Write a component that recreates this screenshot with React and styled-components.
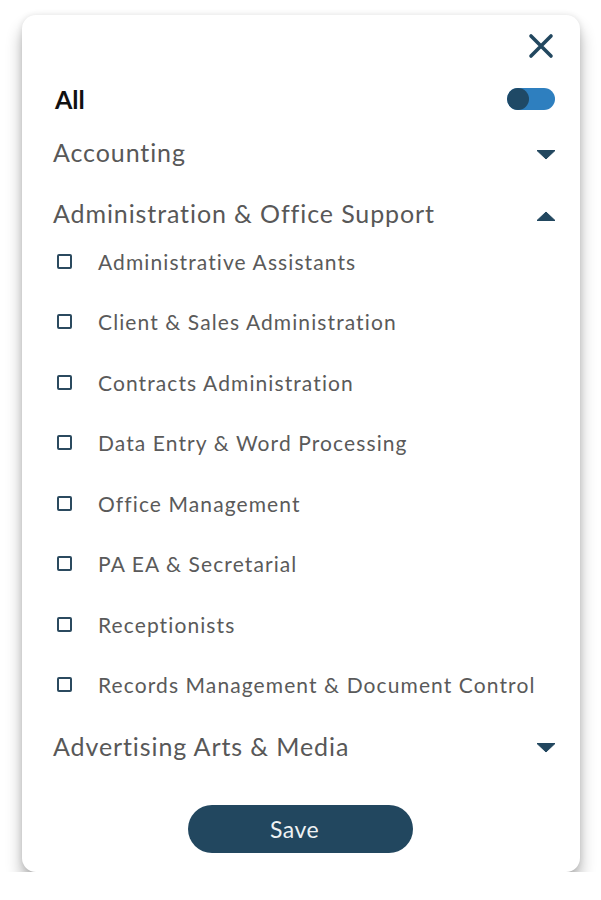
import React, { useState } from 'react';
import styled, { createGlobalStyle } from 'styled-components';

const GlobalStyle = createGlobalStyle`
  body {
    margin: 0;
    background: #ffffff;
    font-family: Lato, "Open Sans", sans-serif;
  }
`;

const navy = '#22475f';

const groups = [
  { name: 'Accounting', open: false, items: [] },
  {
    name: 'Administration & Office Support',
    open: true,
    items: [
      'Administrative Assistants',
      'Client & Sales Administration',
      'Contracts Administration',
      'Data Entry & Word Processing',
      'Office Management',
      'PA EA & Secretarial',
      'Receptionists',
      'Records Management & Document Control',
    ],
  },
  { name: 'Advertising Arts & Media', open: false, items: [] },
];

const Caret = ({ up }) => (
  <CaretIcon width="20" height="10" viewBox="0 0 20 10">
    {up ? (
      <path d="M1 9.5 L10 1 L19 9.5 Z" fill={navy} stroke={navy} strokeLinejoin="round" strokeWidth="1" />
    ) : (
      <path d="M1 0.5 L19 0.5 L10 9 Z" fill={navy} stroke={navy} strokeLinejoin="round" strokeWidth="1" />
    )}
  </CaretIcon>
);

const App = () => {
  const [all, setAll] = useState(true);

  return (
    <>
      <GlobalStyle />
      <Card>
        <CloseRow>
          <CloseButton aria-label="Close">
            <svg width="26" height="26" viewBox="0 0 26 26">
              <path d="M3 3 L23 23 M23 3 L3 23" stroke={navy} strokeWidth="3.6" strokeLinecap="round" />
            </svg>
          </CloseButton>
        </CloseRow>

        <AllRow>
          <AllLabel>All</AllLabel>
          <Toggle $on={all} onClick={() => setAll(!all)}>
            <Knob $on={all} />
          </Toggle>
        </AllRow>

        <Groups>
          {groups.map(g => (
            <Group key={g.name}>
              <GroupHeader>
                <GroupName>{g.name}</GroupName>
                <Caret up={g.open} />
              </GroupHeader>
              {g.open && (
                <ItemList>
                  {g.items.map(item => (
                    <Item key={item}>
                      <Box />
                      <ItemLabel>{item}</ItemLabel>
                    </Item>
                  ))}
                </ItemList>
              )}
            </Group>
          ))}
        </Groups>

        <Footer>
          <SaveButton>Save</SaveButton>
        </Footer>
      </Card>
    </>
  );
};

export default App;

const Card = styled.div`
  box-sizing: border-box;
  margin: 15px 0 0 22px;
  width: 558px;
  height: 857px;
  background: #ffffff;
  border-radius: 14px;
  box-shadow: 0 12px 16px rgba(0, 0, 0, 0.3), 0 0 6px rgba(0, 0, 0, 0.1);
  padding: 18px 25px 19px 31px;
  display: flex;
  flex-direction: column;
`;

const CloseRow = styled.div`
  display: flex;
  justify-content: flex-end;
  height: 26px;
  padding-right: 1px;
`;

const CloseButton = styled.button`
  border: none;
  background: none;
  padding: 0;
  width: 26px;
  height: 26px;
  cursor: pointer;
`;

const AllRow = styled.div`
  display: flex;
  align-items: center;
  justify-content: space-between;
  height: 30px;
  margin-top: 25px;
  padding-left: 2px;
`;

const AllLabel = styled.span`
  font-size: 25px;
  font-weight: 700;
  color: #111111;
`;

const Toggle = styled.div`
  width: 48px;
  height: 22px;
  border-radius: 11px;
  background: ${p => (p.$on ? '#2e7fbf' : '#cfd6dc')};
  display: flex;
  align-items: center;
  justify-content: flex-start;
  cursor: pointer;
`;

const Knob = styled.div`
  width: 22px;
  height: 22px;
  border-radius: 50%;
  background: #1f4966;
`;

const Groups = styled.div`
  display: flex;
  flex-direction: column;
  gap: 21px;
  margin-top: 18px;
`;

const Group = styled.div`
  display: flex;
  flex-direction: column;
`;

const GroupHeader = styled.div`
  display: flex;
  align-items: center;
  justify-content: space-between;
  height: 40px;
`;

const CaretIcon = styled.svg`
  margin-top: 5px;
  margin-right: -1px;
`;

const GroupName = styled.span`
  font-size: 25px;
  letter-spacing: 0.9px;
  color: #585858;
`;

const ItemList = styled.div`
  display: flex;
  flex-direction: column;
  gap: 20.5px;
  margin-top: 8px;
`;

const Item = styled.label`
  display: flex;
  align-items: center;
  height: 40px;
  padding-left: 4px;
  cursor: pointer;
`;

const Box = styled.span`
  box-sizing: border-box;
  width: 15px;
  height: 15px;
  border: 2px solid #2b4a5f;
  border-radius: 2px;
  flex-shrink: 0;
`;

const ItemLabel = styled.span`
  margin-left: 26px;
  font-size: 21px;
  letter-spacing: 1.1px;
  color: #5a5a5a;
`;

const Footer = styled.div`
  display: flex;
  justify-content: center;
  margin-top: 39px;
  padding-right: 7px;
`;

const SaveButton = styled.button`
  width: 225px;
  height: 48px;
  border: none;
  border-radius: 24px;
  padding: 0 12px 0 0;
  background: ${navy};
  color: #eef2f4;
  font-family: Lato, "Open Sans", sans-serif;
  font-size: 23px;
  letter-spacing: 0.5px;
  cursor: pointer;
`;
